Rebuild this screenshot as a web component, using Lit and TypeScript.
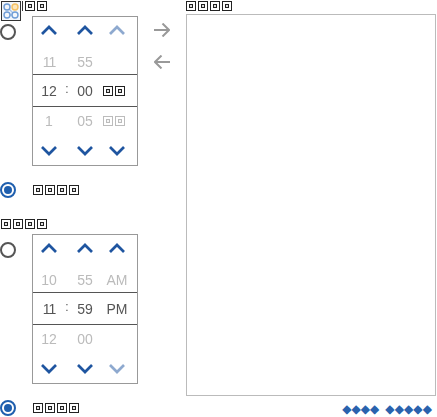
import { LitElement, html, css, svg } from "lit";
import { customElement, property } from "lit/decorators.js";

const up = svg`<polyline points="1,9 8,2 15,9"></polyline>`;
const down = svg`<polyline points="1,2 8,9 15,2"></polyline>`;

// the unreadable labels in the shot are concentric box glyphs
const tofuStyles = css`
  .tofu {
    display: flex;
    gap: 2px;
  }
  .tofu__box {
    position: relative;
    display: block;
    box-sizing: border-box;
    width: 10px;
    height: 10px;
    border: 1px solid #222;
  }
  .tofu__box::after {
    content: "";
    position: absolute;
    inset: 2px;
    border: 1px solid #222;
    background: #ddd;
  }
`;

const tofu = (n: number) =>
  html`<span class="tofu">${Array.from({ length: n }, () => html`<i class="tofu__box"></i>`)}</span>`;

@customElement("time-spinner")
export class TimeSpinner extends LitElement {
  static styles = [
    tofuStyles,
    css`
      :host {
        display: block;
        width: 104px;
        height: 148px;
        border: 1px solid #999;
        font: 14px "Liberation Sans", Arial, sans-serif;
        will-change: opacity;
      }
      .spinner__row {
        display: grid;
        grid-template-columns: 32px 4px 32px 32px;
        justify-items: center;
        align-items: center;
      }
      .spinner__row--top {
        height: 57px;
        grid-template-rows: 27px 30px;
      }
      .spinner__row--mid {
        height: 31px;
        border-top: 1px solid #555;
        border-bottom: 1px solid #555;
        color: #555;
      }
      .spinner__row--bottom {
        height: 58px;
        grid-template-rows: 28px 30px;
      }
      .spinner__row--top .spinner__val {
        padding-top: 6px;
      }
      .spinner__row--bottom .spinner__val {
        padding-bottom: 1px;
      }
      .spinner__row--bottom svg {
        margin-top: 1px;
      }
      .spinner__val {
        color: #bbb;
        white-space: nowrap;
      }
      .spinner__tight {
        letter-spacing: -1px;
      }
      .spinner__colon {
        font-size: 12px;
        position: relative;
        top: -2px;
      }
      .spinner__period {
        display: block;
        margin-right: 6px;
      }
      .spinner__period--dim {
        opacity: 0.3;
      }
      svg {
        display: block;
        width: 16px;
        height: 11px;
        fill: none;
        stroke: #1f55a0;
        stroke-width: 2.7;
      }
      svg.faded {
        opacity: 0.5;
      }
    `,
  ];

  @property() hour = "";
  @property() minute = "";
  @property() period = "";
  @property() prevHour = "";
  @property() prevMinute = "";
  @property() prevPeriod = "";
  @property() nextHour = "";
  @property() nextMinute = "";
  @property() nextPeriod = "";
  @property() fadedUp = false;
  @property() fadedDown = false;

  private cell(v: string, dim = false) {
    return v === "tofu"
      ? html`<span class="spinner__period ${dim ? "spinner__period--dim" : ""}">${tofu(2)}</span>`
      : v;
  }

  // "11" sits closer together in the shot, kerned
  private num(v: string) {
    return v === "11" ? "spinner__tight" : "";
  }

  render() {
    return html`
      <div class="spinner__row spinner__row--top">
        <svg viewBox="0 0 16 11">${up}</svg><span></span>
        <svg viewBox="0 0 16 11">${up}</svg>
        <svg class=${this.fadedUp ? "faded" : ""} viewBox="0 0 16 11">${up}</svg>
        <span class="spinner__val ${this.num(this.prevHour)}">${this.prevHour}</span><span></span>
        <span class="spinner__val">${this.prevMinute}</span>
        <span class="spinner__val">${this.cell(this.prevPeriod, true)}</span>
      </div>
      <div class="spinner__row spinner__row--mid">
        <span class=${this.num(this.hour)}>${this.hour}</span><span class="spinner__colon">:</span>
        <span>${this.minute}</span><span>${this.cell(this.period)}</span>
      </div>
      <div class="spinner__row spinner__row--bottom">
        <span class="spinner__val">${this.nextHour}</span><span></span>
        <span class="spinner__val">${this.nextMinute}</span>
        <span class="spinner__val">${this.cell(this.nextPeriod, true)}</span>
        <svg viewBox="0 0 16 11">${down}</svg><span></span>
        <svg viewBox="0 0 16 11">${down}</svg>
        <svg class=${this.fadedDown ? "faded" : ""} viewBox="0 0 16 11">${down}</svg>
      </div>
    `;
  }
}

@customElement("app-root")
export class AppRoot extends LitElement {
  static styles = [
    tofuStyles,
    css`
      :host {
        display: block;
        width: 437px;
        height: 417px;
        overflow: hidden;
        font: 12px "DejaVu Sans", sans-serif;
        color: #333;
      }
      .page {
        display: grid;
        grid-template-columns: 186px 250px;
      }
      .left {
        display: flex;
      }
      .left__main {
        width: 154px;
      }
      .head {
        display: flex;
        height: 15px;
        padding: 1px 0 0 1px;
        align-items: flex-start;
      }
      .head__icon {
        flex: none;
        width: 18px;
        height: 18px;
        border: 1px solid #333;
        background: #f3f6fb;
        position: relative;
        z-index: 1;
      }
      .head__icon svg {
        display: block;
      }
      .head__bar {
        width: 1px;
        height: 10px;
        margin: 0 2px 0 1px;
        background: #333;
      }
      .row {
        display: flex;
        align-items: flex-start;
      }
      .radio {
        flex: none;
        width: 12px;
        height: 12px;
        margin: 8px 16px 0 0;
        border: 2px solid #555;
        border-radius: 50%;
      }
      .choice {
        display: flex;
        align-items: center;
        height: 16px;
        margin-top: 16px;
      }
      .radio--on {
        margin-top: 0;
        margin-right: 17px;
        border-color: #1f5fae;
        position: relative;
      }
      .radio--on::after {
        content: "";
        position: absolute;
        inset: 2px;
        border-radius: 50%;
        background: #1f5fae;
      }
      .label2 {
        margin-top: 21px;
        padding-left: 1px;
        height: 15px;
      }
      .arrows {
        display: flex;
        flex-direction: column;
        gap: 18px;
        padding-top: 23px;
      }
      .arrows svg {
        display: block;
        width: 16px;
        height: 14px;
        fill: none;
        stroke: #999;
        stroke-width: 2;
      }
      .right__label {
        height: 13px;
        padding-top: 1px;
      }
      .right__box {
        width: 248px;
        height: 380px;
        border: 1px solid #bbb;
      }
      .right__foot {
        margin-top: 7px;
        padding-right: 4px;
        text-align: right;
        color: #2a62ad;
        font-size: 12px;
        line-height: 12px;
        letter-spacing: 0.1px;
        word-spacing: 2px;
        white-space: pre;
      }
    `,
  ];

  render() {
    return html`<div class="page">
      <div class="left">
        <div class="left__main">
          <div class="head">
            <span class="head__icon">
              <svg width="18" height="18" viewBox="0 0 18 18" fill="none" stroke="#6f9dd6" stroke-width="1.4">
                <path d="M7 7 L11 11 M8 13 H10" stroke="#a9c4e6"></path>
                <circle cx="5" cy="5" r="3"></circle>
                <circle cx="13" cy="5" r="3" stroke="#f5c063" fill="#fde6ba"></circle>
                <circle cx="5" cy="13" r="3"></circle>
                <circle cx="13" cy="13" r="3"></circle>
              </svg>
            </span>
            <span class="head__bar"></span>
            ${tofu(2)}
          </div>
          <div class="row">
            <span class="radio"></span>
            <time-spinner
              hour="12" minute="00" period="tofu"
              prevHour="11" prevMinute="55"
              nextHour="1" nextMinute="05" nextPeriod="tofu"
              .fadedUp=${true}
            ></time-spinner>
          </div>
          <div class="choice">
            <span class="radio radio--on"></span>
            ${tofu(4)}
          </div>
          <div class="label2">${tofu(4)}</div>
          <div class="row">
            <span class="radio"></span>
            <time-spinner
              hour="11" minute="59" period="PM"
              prevHour="10" prevMinute="55" prevPeriod="AM"
              nextHour="12" nextMinute="00"
              .fadedDown=${true}
            ></time-spinner>
          </div>
          <div class="choice">
            <span class="radio radio--on"></span>
            ${tofu(4)}
          </div>
        </div>
        <div class="arrows">
          <svg viewBox="0 0 16 14"><path d="M0 7 H15 M8.5 0.5 L15 7 L8.5 13.5"></path></svg>
          <svg viewBox="0 0 16 14"><path d="M16 7 H1 M7.5 0.5 L1 7 L7.5 13.5"></path></svg>
        </div>
      </div>
      <div class="right">
        <div class="right__label">${tofu(4)}</div>
        <div class="right__box"></div>
        <div class="right__foot">◆◆◆◆ ◆◆◆◆◆</div>
      </div>
    </div>`;
  }
}
